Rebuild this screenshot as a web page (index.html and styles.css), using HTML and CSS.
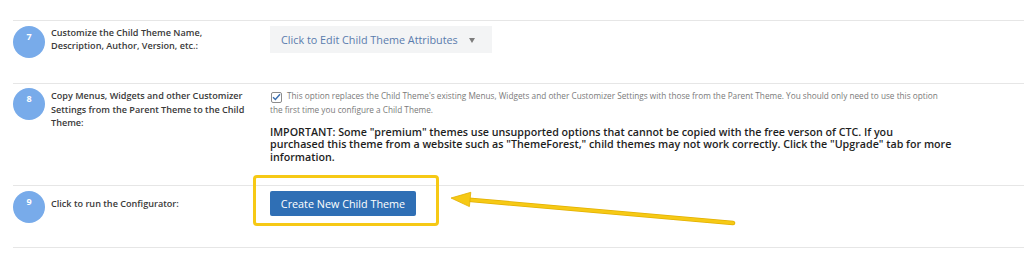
FILE: index.html
```html
<!DOCTYPE html>
<html>
<head>
<meta charset="utf-8">
<link rel="stylesheet" href="styles.css">
</head>
<body>
<div class="page">
  <div class="rows">
    <div class="row row-7">
      <div class="num">7</div>
      <div class="label">Customize the Child Theme Name, Description, Author, Version, etc.:</div>
      <div class="content">
        <div class="dropdown"><span>Click to Edit Child Theme Attributes</span><span class="caret"></span></div>
      </div>
    </div>
    <div class="row row-8">
      <div class="num">8</div>
      <div class="label">Copy Menus, Widgets and other Customizer Settings from the Parent Theme to the Child Theme:</div>
      <div class="content">
        <p class="note"><span class="check"><svg width="9" height="8" viewBox="0 0 9 8"><path d="M1 4.2 L3.4 6.5 L8 1.2" fill="none" stroke="#3b6fb0" stroke-width="1.4"/></svg></span>This option replaces the Child Theme's existing Menus, Widgets and other Customizer Settings with those from the Parent Theme. You should only need to use this option the first time you configure a Child Theme.</p>
        <p class="important">IMPORTANT: Some "premium" themes use unsupported options that cannot be copied with the free verson of CTC. If you<br>purchased this theme from a website such as "ThemeForest," child themes may not work correctly. Click the "Upgrade" tab for more information.</p>
      </div>
    </div>
    <div class="row row-9">
      <div class="num">9</div>
      <div class="label">Click to run the Configurator:</div>
      <div class="content">
        <button class="btn">Create New Child Theme</button>
      </div>
    </div>
  </div>
  <div class="highlight"></div>
  <svg class="arrow" width="1024" height="267" viewBox="0 0 1024 267">
    <line x1="733" y1="223" x2="466" y2="199.5" stroke="#e2b000" stroke-width="4.6" stroke-linecap="round"/>
    <line x1="733" y1="223" x2="466" y2="199.5" stroke="#f6c915" stroke-width="3" stroke-linecap="round"/>
    <polygon points="451,198 470.8,192.3 469.4,206.6" fill="#f6c915" stroke="#e2b000" stroke-width="0.8" stroke-linejoin="round"/>
  </svg>
</div>
</body>
</html>
```
FILE: styles.css
```css
* { box-sizing: border-box; }
html, body { margin: 0; padding: 0; background: #fff; }
body { font-family: "Open Sans", "Noto Sans", sans-serif; color: #333; }
.page { position: relative; width: 1024px; height: 267px; overflow: hidden; padding-top: 20px; }
.rows { margin-left: 13px; border-bottom: 1px solid #e6e6e6; }
.row {
  display: grid;
  grid-template-columns: 32px 200px 1fr;
  column-gap: 6px;
  border-top: 1px solid #e6e6e6;
  padding-top: 5px;
}
.row-7 { height: 63px; }
.row-8 { height: 102px; padding-top: 4px; }
.row-9 { height: 62px; }
.num {
  width: 32px; height: 32px; border-radius: 50%;
  background: #78abea; color: #fff;
  font-size: 9px; font-weight: 700; text-align: center;
  line-height: 9px; padding-top: 6px;
}
.label {
  font-size: 9.1px; font-weight: 600; color: #3a3a3a;
  line-height: 12.5px; padding-top: 1px;
}
.row-8 .label { line-height: 13.5px; }
.row-9 .label { padding-top: 7px; }
.content { padding-left: 13px; }
.dropdown {
  width: 222px; height: 27px; background: #f3f4f5;
  display: flex; align-items: center; justify-content: space-between;
  padding: 0 17px 0 11px;
  color: #5a7cad; font-size: 10.8px;
}
.caret { width: 0; height: 0; border-left: 3.5px solid transparent; border-right: 3.5px solid transparent; border-top: 5px solid #7d7d7d; margin-top: 2px; }
.note { margin: 0; max-width: 674px; font-size: 8.24px; color: #7a7a7a; line-height: 13px; padding-top: 1px; }
.check {
  display: inline-flex; align-items: center; justify-content: center;
  width: 11px; height: 11px; border: 1px solid #8c8c8c; border-radius: 2px;
  vertical-align: -2px; margin-right: 5px; margin-left: 1px; background: #fff;
}
.important { margin: 10px 0 0; max-width: 688px; font-size: 10.7px; font-weight: 600; color: #1e1e1e; line-height: 12.6px; }
.btn {
  display: block; margin-top: 0; width: 146px; height: 25px;
  background: #2f6fb5; color: #fff; border: none; border-radius: 2px;
  font-family: inherit; font-size: 10.8px; padding: 0;
}
.highlight {
  position: absolute; left: 253px; top: 175px; width: 186px; height: 51px;
  border: 3px solid #f6c915; border-radius: 4px;
}
.arrow { position: absolute; left: 0; top: 0; }
```
